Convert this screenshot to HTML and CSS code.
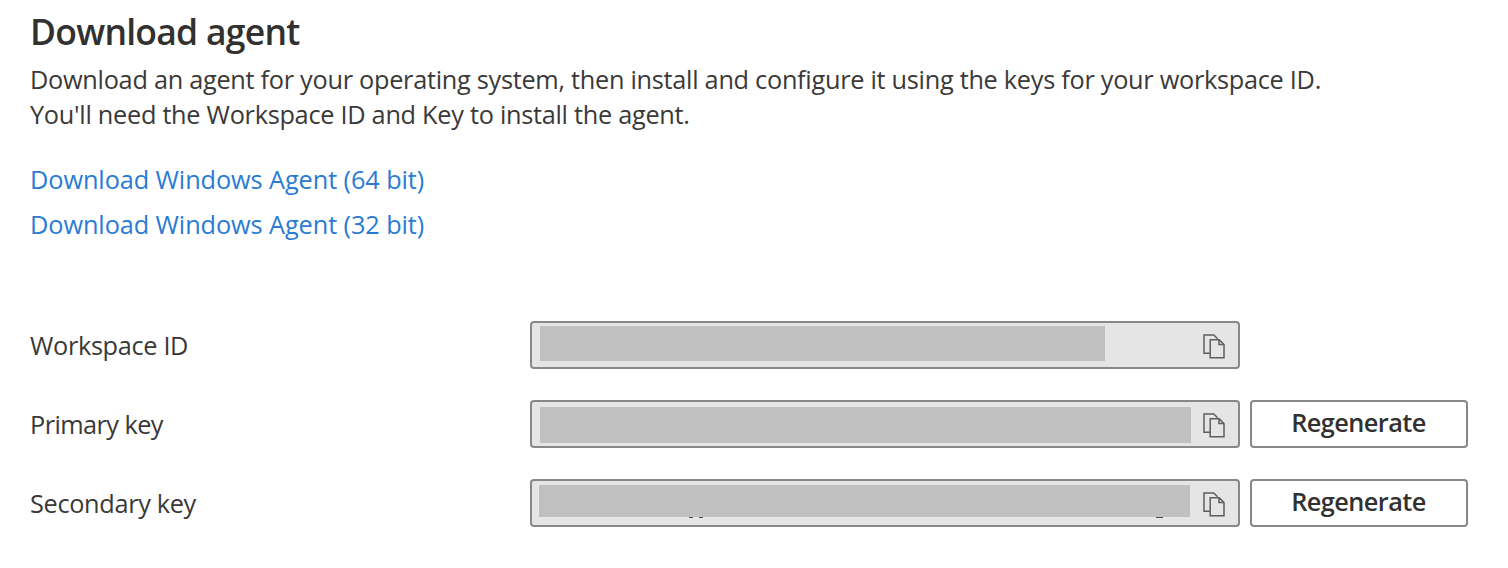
FILE: index.html
```html
<!DOCTYPE html>
<html lang="en">
<head>
<meta charset="utf-8">
<title>Download agent</title>
<link rel="stylesheet" href="styles.css">
</head>
<body>
<svg class="defs" width="0" height="0" aria-hidden="true">
  <symbol id="copy" viewBox="0 0 22 25">
    <path d="M6.5 19.2H1V1H10.8L14.6 4.8M7.2 5.7H16.2L21 10.5V23.8H7.2ZM16 5.7V10.4H21"/>
  </symbol>
</svg>
<main class="panel">
  <h1 class="title">Download agent</h1>
  <p class="intro">Download an agent for your operating system, then install and configure it using the keys for your workspace ID.<br>You'll need the Workspace ID and Key to install the agent.</p>
  <nav class="links">
    <a class="link">Download Windows Agent (64 bit)</a>
    <a class="link">Download Windows Agent (32 bit)</a>
  </nav>
  <div class="rows">
    <div class="row">
      <span class="label">Workspace ID</span>
      <div class="field"><div class="mask mask-id"></div><svg class="copy"><use href="#copy"/></svg></div>
    </div>
    <div class="row">
      <span class="label label-primary">Primary key</span>
      <div class="field"><div class="mask mask-primary"></div><svg class="copy"><use href="#copy"/></svg></div>
      <button class="button">Regenerate</button>
    </div>
    <div class="row">
      <span class="label">Secondary key</span>
      <div class="field"><div class="mask mask-secondary"><i class="tail tail-a"></i><i class="tail tail-b"></i><i class="tail tail-c"></i></div><svg class="copy"><use href="#copy"/></svg></div>
      <button class="button">Regenerate</button>
    </div>
  </div>
</main>
</body>
</html>
```
FILE: styles.css
```css
* { box-sizing: border-box; }
body {
  margin: 0;
  background: #fff;
  color: #3a3938;
  font: 25.3px/35px "Open Sans", "Noto Sans", sans-serif;
}
.defs { position: absolute; }
.panel { padding: 7px 0 0 30px; height: 568px; }
.title { margin: 0 0 7px; color: #323130; font-size: 35.5px; line-height: 48px; font-weight: 600; letter-spacing: -0.75px; }
.intro { margin: 0 0 30px; white-space: nowrap; letter-spacing: -0.28px; }
.links { display: flex; flex-direction: column; align-items: flex-start; gap: 10px; margin-bottom: 79px; }
.link { color: #2b7bd3; white-space: nowrap; letter-spacing: -0.09px; }
.rows { display: flex; flex-direction: column; gap: 31px; }
.row { display: grid; grid-template-columns: 500px 710px 228px; height: 48px; }
.label { align-self: center; justify-self: start; white-space: nowrap; padding-top: 1px; letter-spacing: -0.33px; }
.label-primary { letter-spacing: -0.57px; }
.field {
  display: flex;
  justify-content: space-between;
  align-items: flex-start;
  border: 2px solid #8a8886;
  border-radius: 4px;
  background: #e5e5e5;
  padding: 0 13px 0 8px;
}
.mask { position: relative; background: #c0c0c0; }
.mask-id { width: 565px; height: 35px; margin-top: 3px; }
.mask-primary { width: 651px; height: 36px; margin-top: 5px; }
.mask-secondary { width: 651px; height: 32px; margin: 4px 0 0 -1px; }
.tail { position: absolute; top: 32px; height: 1px; width: 4px; background: #504c50; }
.tail-a { left: 150px; }
.tail-b { left: 160px; }
.tail-c { left: 617px; width: 7px; }
.copy { width: 22px; height: 25px; margin-top: 11px; fill: none; stroke: #605e5c; stroke-width: 1.5; }
.button {
  margin: 0 0 0 10px;
  width: 218px;
  padding: 0 1px 4px 0;
  border: 2px solid #8a8886;
  border-radius: 4px;
  background: #fff;
  color: #323130;
  font: 600 25.3px/35px "Open Sans", "Noto Sans", sans-serif;
  letter-spacing: -0.55px;
}
```
